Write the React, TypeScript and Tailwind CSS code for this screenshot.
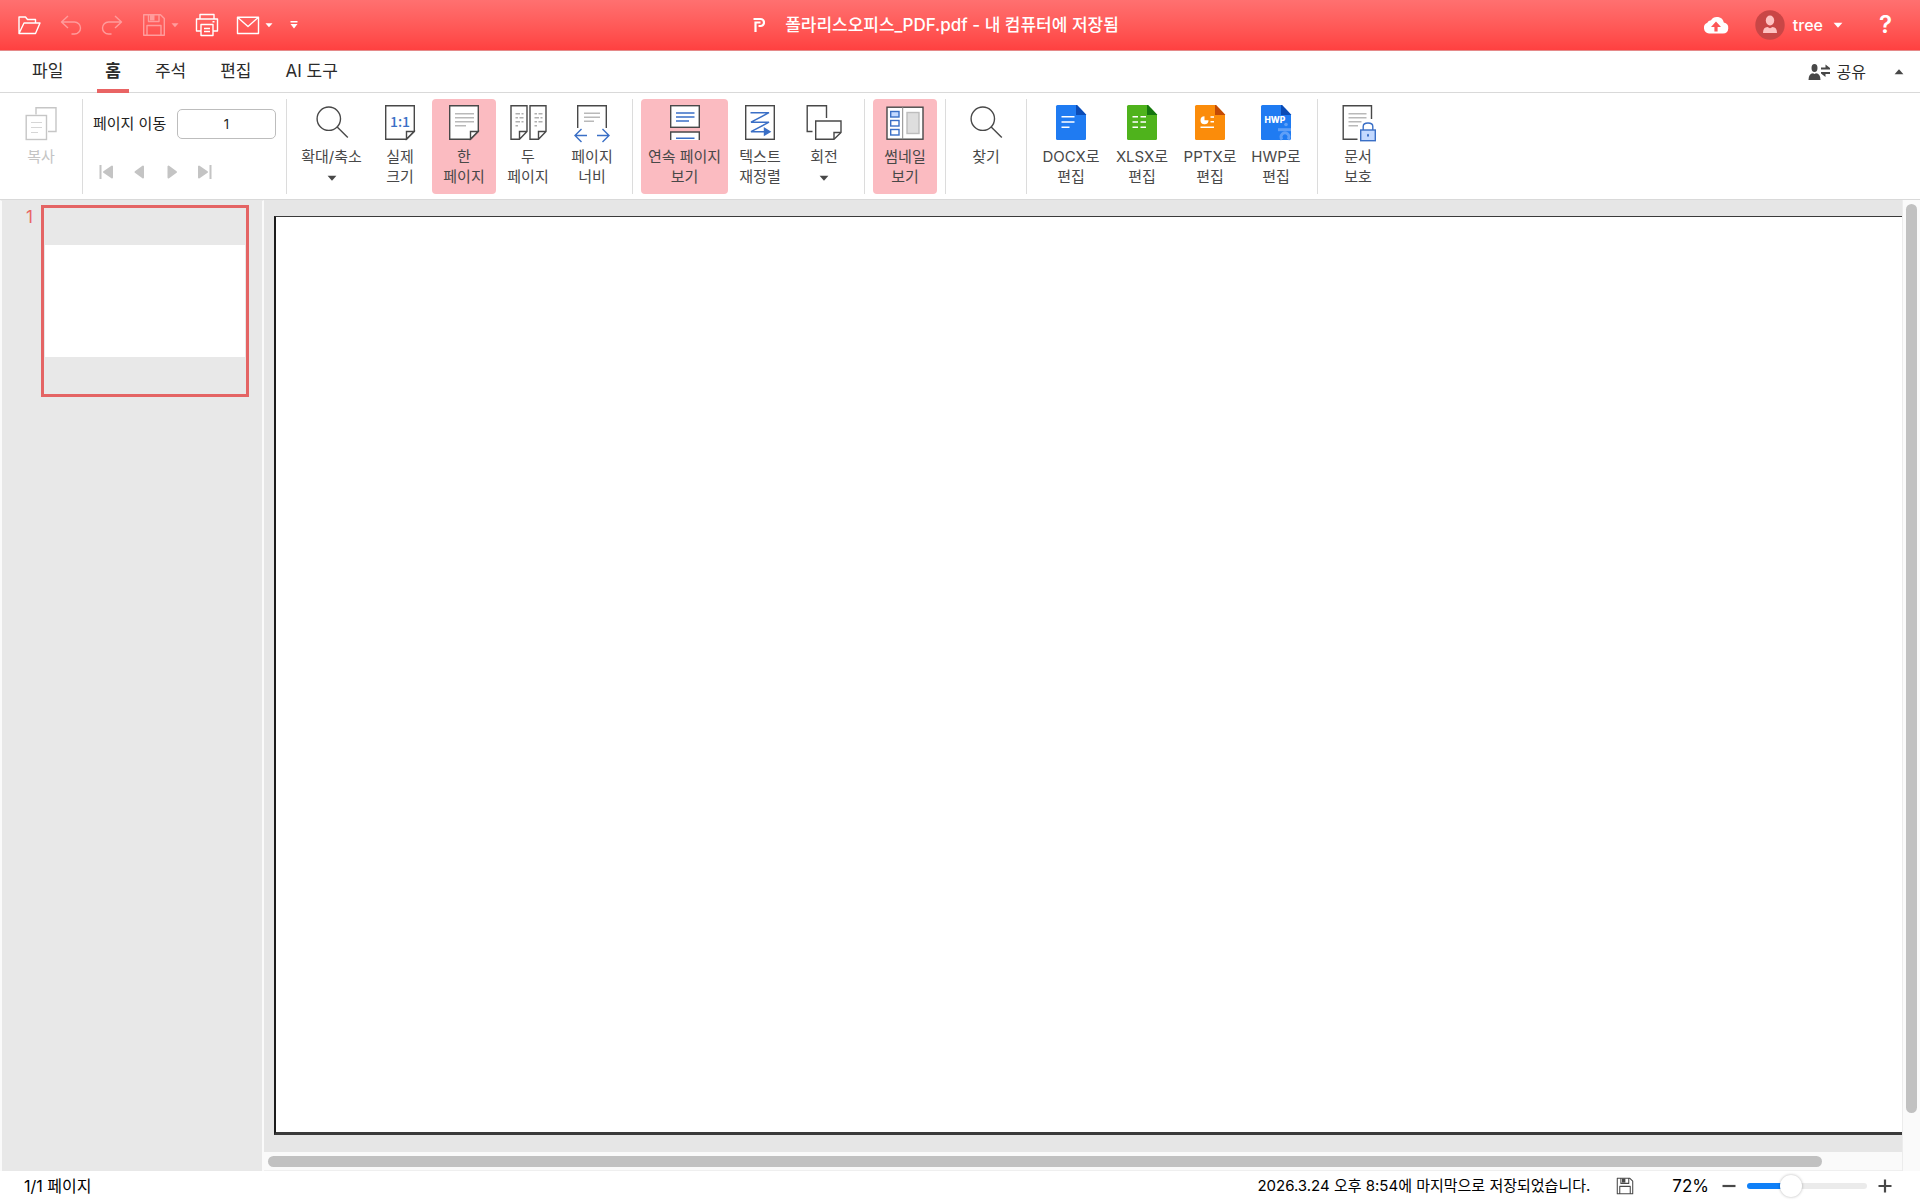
import React, { useState } from "react";

type IconProps = { children: React.ReactNode; className?: string };

function Icon36({ children, className = "" }: IconProps) {
  return (
    <svg
      viewBox="0 0 36 36"
      className={`h-9 w-9 shrink-0 overflow-visible ${className}`}
      fill="none"
      stroke="#484848"
      strokeWidth="1.4"
      aria-hidden="true"
    >
      {children}
    </svg>
  );
}

function Icon24({ children, className = "h-6 w-6" }: IconProps) {
  return (
    <svg
      viewBox="0 0 24 24"
      className={`shrink-0 overflow-visible ${className}`}
      fill="none"
      stroke="currentColor"
      strokeWidth="1.4"
      strokeLinejoin="round"
      aria-hidden="true"
    >
      {children}
    </svg>
  );
}

function Caret({ className = "", up = false }: { className?: string; up?: boolean }) {
  return (
    <svg viewBox="0 0 10 6" className={`shrink-0 ${className}`} fill="currentColor" aria-hidden="true">
      {up ? <path d="M5 0.3 9.4 5.2H0.6z" /> : <path d="M0.6 0.8H9.4L5 5.7z" />}
    </svg>
  );
}

/* ---------- ribbon icons ---------- */

const CopyIcon = () => (
  <Icon36>
    <g stroke="#c6c6c6">
      <path d="M13 9.500V2.700H33V26.500H25" />
      <rect x="3.200" y="10.500" width="20.300" height="24" />
      <path d="M8 17.500H19M8 22.500H19M8 27.500H15" stroke="#d6d6d6" strokeWidth="1" />
    </g>
  </Icon36>
);

const SearchIcon = () => (
  <Icon36>
    <circle cx="14.800" cy="13.700" r="11.700" />
    <path d="M23.200 22 33.800 32.600" />
  </Icon36>
);

const FoldedPage = () => (
  <>
    <path d="M3.700 0.700H32.300V26.500L24.500 34.300H3.700z" fill="#fff" />
    <path d="M24.500 34V26.500H32z" fill="#fff" />
  </>
);

const ActualSizeIcon = () => (
  <Icon36>
    <FoldedPage />
    <text
      x="18"
      y="21.500"
      textAnchor="middle"
      fontSize="14"
      fontWeight="500"
      fill="#3a6fc6"
      stroke="none"
      fontFamily="'Noto Sans CJK KR', sans-serif"
    >
      1:1
    </text>
  </Icon36>
);

const OnePageIcon = () => (
  <Icon36>
    <FoldedPage />
    <path d="M9 8.700H28M9 12.700H28M9 16.700H28M9 20.700H20" stroke="#b9b9b9" />
  </Icon36>
);

const TwoPageIcon = () => (
  <Icon36>
    <path d="M1 0.700H17V26.500L9.500 34.300H1zM9.500 34V26.500H17" fill="#fff" />
    <path d="M20 0.700H36V26.500L28.500 34.300H20zM28.500 34V26.500H36" fill="#fff" />
    <path
      d="M5.500 8.700H10M11.500 8.700H13.500M5.500 12.700H8M9.500 12.700H13.500M5.500 16.700H10M11.500 16.700H13.500M5.500 20.700H8M24.500 8.700H27M28.500 8.700H32.500M24.500 12.700H29M30.500 12.700H32.500M24.500 16.700H27M28.500 16.700H32.500M24.500 20.700H27"
      stroke="#b0b0b0"
    />
  </Icon36>
);

const PageWidthIcon = () => (
  <Icon36>
    <path d="M3.700 23V0.700H32.300V23" />
    <path d="M10 8.200H26M10 12.200H26M10 16.200H20" stroke="#b9b9b9" />
    <path d="M13 30.500H1.500M7.500 24 1 30.500 7.500 37M23 30.500H34.500M28.500 24 35 30.500 28.500 37" stroke="#3a6fc6" />
  </Icon36>
);

const ContinuousIcon = () => (
  <Icon36>
    <rect x="3.700" y="0.700" width="28.600" height="21.600" fill="#fff" />
    <path d="M3.700 35V27H32.300V35" fill="#fff" />
    <path d="M9 8H27.500M9 12H27.500M9 16H22M9 33.300H27.500" stroke="#3a6fc6" />
  </Icon36>
);

const ReflowIcon = () => (
  <Icon36>
    <rect x="3.700" y="0.700" width="28.600" height="33.600" />
    <g stroke="#3a6fc6">
      <path d="M8.500 7.700H27L9 17.200H27L9 26.700H23" />
      <path d="M22.500 23.300 28 26.700 22.500 30z" fill="#3a6fc6" />
    </g>
  </Icon36>
);

const RotateIcon = () => (
  <Icon36>
    <path d="M6.500 26.500H1.200V0.700H20.500V13" />
    <path d="M9.700 16H35V27.500L28 34.300H9.700z" fill="#fff" />
    <path d="M28 34V27.500H35" />
  </Icon36>
);

const ThumbnailIcon = () => (
  <Icon36>
    <rect x="0" y="2.200" width="36" height="32" fill="#fff" />
    <path d="M15.700 2.200V34.200" stroke="#8a8a8a" strokeWidth="1" />
    <rect x="20" y="7.500" width="12" height="21" fill="#dedede" stroke="#bdbdbd" />
    <g stroke="#3a6fc6">
      <rect x="3.700" y="6.500" width="8.300" height="5.500" fill="#c3d9ff" />
      <rect x="3.700" y="15.500" width="8.300" height="5.500" />
      <rect x="3.700" y="24.500" width="8.300" height="5.500" />
    </g>
  </Icon36>
);

function FileShape({ body, fold, children }: { body: string; fold: string; children: React.ReactNode }) {
  return (
    <Icon36>
      <g stroke="none">
        <path d="M4.500 0H24L33 9.500V33.500Q33 35 31.500 35H4.500Q3 35 3 33.500V1.500Q3 0 4.500 0z" fill={body} />
        <path d="M23 0H24L33 9.500V10H23z" fill={fold} />
      </g>
      {children}
    </Icon36>
  );
}

const DocxIcon = () => (
  <FileShape body="#1f7bf2" fold="#0b4bb5">
    <path d="M8.500 11.700H21.500M8.500 17H21.500M8.500 22.300H16.500" stroke="#fff" strokeWidth="1.600" />
  </FileShape>
);

const XlsxIcon = () => (
  <FileShape body="#4fb31c" fold="#14750f">
    <path
      d="M8.500 11.700H14M16.500 11.700H22M8.500 17H14M16.500 17H22M8.500 22.300H14M16.500 22.300H22"
      stroke="#fff"
      strokeWidth="1.600"
    />
  </FileShape>
);

const PptxIcon = () => (
  <FileShape body="#fb8c0a" fold="#c24a06">
    <path d="M12.500 11.200A4 4 0 1 0 16.500 15.200H12.500z" fill="#fff" stroke="none" />
    <path d="M18.500 12H22M18.500 16.700H22M8.500 22.300H22" stroke="#fff" strokeWidth="1.600" />
  </FileShape>
);

const HwpIcon = () => (
  <FileShape body="#1f7bf2" fold="#0b4bb5">
    <g stroke="#5f9ff7" fill="none">
      <circle cx="28" cy="19.500" r="1.800" fill="#5f9ff7" stroke="none" />
      <path d="M20 24.700H33" strokeWidth="3" />
      <path d="M24 34.500A4 4 0 1 1 30 34.500" strokeWidth="3" />
      <circle cx="27" cy="31.500" r="1" fill="#1f7bf2" stroke="none" />
    </g>
    <text
      x="6.500"
      y="17.500"
      fontSize="8.500"
      fontWeight="800"
      fill="#fff"
      stroke="none"
      fontFamily="Inter, sans-serif"
    >
      HWP
    </text>
  </FileShape>
);

const ProtectIcon = () => (
  <Icon36>
    <path d="M17.500 34.300H3.200V0.700H31.500V14" />
    <path d="M8.500 8.700H26.500M8.500 12.700H26.500M8.500 16.700H21.500M8.500 20.700H18" stroke="#b9b9b9" />
    <g stroke="#3a6fc6">
      <path d="M23.200 25V21.500Q23.200 18 28 18Q32.800 18 32.800 21.500V25" />
      <rect x="20.700" y="25" width="14.600" height="10.700" fill="#c3d9ff" />
      <ellipse cx="28" cy="30.300" rx="1" ry="1.500" fill="#3a6fc6" stroke="none" />
    </g>
  </Icon36>
);

/* ---------- ribbon parts ---------- */

type RibbonItem = {
  icon: React.ReactNode;
  lines: string[];
  width?: string;
  active?: boolean;
  menu?: boolean;
  disabled?: boolean;
};

function RibbonButton({ icon, lines, width = "w-16", active, menu, disabled }: RibbonItem) {
  return (
    <button
      type="button"
      disabled={disabled}
      aria-pressed={active}
      className={`flex shrink-0 flex-col items-center rounded-sm pt-1.5 ${width} ${
        active ? "bg-[#fbbbc1]" : ""
      } ${disabled ? "text-[#c4c4c4]" : "text-[#484848]"}`}
    >
      {icon}
      <span className="mt-1.5 flex flex-col text-[15px]/5 whitespace-nowrap">
        {lines.map((line) => (
          <span key={line}>{line}</span>
        ))}
      </span>
      {menu && <Caret className="mt-2 h-1.5 w-2.5" />}
    </button>
  );
}

function RibbonGroup({ items }: { items: RibbonItem[] }) {
  return (
    <div className="flex border-r border-[#dcdcdc] px-2 last:border-r-0">
      {items.map((item) => (
        <RibbonButton key={item.lines.join(" ")} {...item} />
      ))}
    </div>
  );
}

const groups: RibbonItem[][] = [
  [
    { icon: <SearchIcon />, lines: ["확대/축소"], width: "w-[73px]", menu: true },
    { icon: <ActualSizeIcon />, lines: ["실제", "크기"] },
    { icon: <OnePageIcon />, lines: ["한", "페이지"], active: true },
    { icon: <TwoPageIcon />, lines: ["두", "페이지"] },
    { icon: <PageWidthIcon />, lines: ["페이지", "너비"] },
  ],
  [
    { icon: <ContinuousIcon />, lines: ["연속 페이지", "보기"], width: "w-[87px]", active: true },
    { icon: <ReflowIcon />, lines: ["텍스트", "재정렬"] },
    { icon: <RotateIcon />, lines: ["회전"], menu: true },
  ],
  [{ icon: <ThumbnailIcon />, lines: ["썸네일", "보기"], active: true }],
  [{ icon: <SearchIcon />, lines: ["찾기"] }],
  [
    { icon: <DocxIcon />, lines: ["DOCX로", "편집"], width: "w-18" },
    { icon: <XlsxIcon />, lines: ["XLSX로", "편집"], width: "w-[70px]" },
    { icon: <PptxIcon />, lines: ["PPTX로", "편집"], width: "w-[66px]" },
    { icon: <HwpIcon />, lines: ["HWP로", "편집"], width: "w-[66px]" },
  ],
  [{ icon: <ProtectIcon />, lines: ["문서", "보호"] }],
];

const pageMoves = [
  { label: "첫 페이지", path: "M1.500 2V16M13 3.500V14.500L5 9z" },
  { label: "이전 페이지", path: "M11 3.500V14.500L3.500 9z" },
  { label: "다음 페이지", path: "M3.500 3.500V14.500L11 9z" },
  { label: "마지막 페이지", path: "M12.500 2V16M1 3.500V14.500L9 9z" },
];

function PageNavigation() {
  return (
    <div className="flex flex-col border-r border-[#dcdcdc] pr-2.5 pl-1.5">
      <div className="flex items-center pt-2.5 pl-1">
        <label htmlFor="page-number" className="w-21 text-[15px]/5 whitespace-nowrap text-[#222]">
          페이지 이동
        </label>
        <input
          id="page-number"
          defaultValue="1"
          className="h-[30px] w-[99px] rounded-[5px] border border-[#bdbdbd] bg-white text-center text-[13px] text-[#222]"
        />
      </div>
      <div className="flex pt-6">
        {pageMoves.map((move) => (
          <button key={move.label} type="button" aria-label={move.label} className="flex w-[33px] justify-center" disabled>
            <svg viewBox="0 0 14 18" className="h-[18px] w-3.5" fill="#c4c4c4" stroke="#c4c4c4" strokeWidth="2" strokeLinejoin="round">
              <path d={move.path} />
            </svg>
          </button>
        ))}
      </div>
    </div>
  );
}

/* ---------- page bars ---------- */

function SaveGlyph({ className = "h-6 w-6" }: { className?: string }) {
  return (
    <Icon24 className={className}>
      <path d="M1.700 1.700H18.500L22.300 5.500V22.300H1.700zM6.500 1.700V8.500H17V1.700M5 22V12.500H19V22" />
      <path d="M8 2H12.500V7.500H8z" fill="currentColor" stroke="none" />
    </Icon24>
  );
}

function TitleBar() {
  return (
    <header className="grid h-[51px] shrink-0 grid-cols-[1fr_auto_1fr] items-center border-b border-[#e58a8a] bg-linear-to-b from-[#ff7070] to-[#ff4040] text-white">
      <div className="flex items-center pl-2">
        <button type="button" aria-label="열기" className="flex w-[42px] justify-center">
          <Icon24>
            <path d="M2 20.500V4H8.500L10.500 6.500H18.500V10M2 20.500 7 10H23L18.500 20.500z" />
          </Icon24>
        </button>
        <button type="button" aria-label="실행 취소" disabled className="flex w-[42px] justify-center text-[#ff9c9c]">
          <Icon24>
            <path d="M9 3 2.500 9 9 15M2.500 9H15.500A5.800 5.800 0 0 1 15.500 21H12.500" />
          </Icon24>
        </button>
        <button type="button" aria-label="다시 실행" disabled className="flex w-10 justify-center text-[#ff9c9c]">
          <Icon24>
            <path d="M15 3 21.500 9 15 15M21.500 9H8.500A5.800 5.800 0 0 0 8.500 21H11.500" />
          </Icon24>
        </button>
        <button type="button" aria-label="저장" disabled className="ml-1.5 flex w-8 justify-center text-[#ff9c9c]">
          <SaveGlyph />
        </button>
        <button type="button" aria-label="저장 옵션" disabled className="flex w-2.5 justify-center text-[#ff9c9c]">
          <Caret className="h-1.5 w-2" />
        </button>
        <button type="button" aria-label="인쇄" className="ml-2 flex w-[38px] justify-center">
          <Icon24>
            <path d="M5 6V1.500H19V6M6 18H1.500V6H22.500V18H18M6 11.500H18V22.500H6zM9 15.500H15M9 18.500H15M17.500 8.800H19.500" />
          </Icon24>
        </button>
        <button type="button" aria-label="메일 보내기" className="ml-1.5 flex w-8 justify-center">
          <Icon24>
            <path d="M1.500 4.200H22.500V20.500H1.500zM1.500 4.200 12 13.500 22.500 4.200" />
          </Icon24>
        </button>
        <button type="button" aria-label="메일 옵션" className="flex w-2.5 justify-center">
          <Caret className="h-1.5 w-2" />
        </button>
        <button type="button" aria-label="빠른 실행 도구 모음" className="ml-3 flex w-4 justify-center">
          <svg viewBox="0 0 8 8" className="h-2 w-2" fill="currentColor" aria-hidden="true">
            <path d="M0.500 0H7.500V1.500H0.500zM0.500 3H7.500L4 7.500z" />
          </svg>
        </button>
      </div>

      <div className="flex items-center gap-5 pr-12">
        <svg viewBox="0 0 12 16" className="h-4 w-3" fill="none" stroke="currentColor" strokeWidth="2.200" aria-hidden="true">
          <path d="M0.500 2H7.500A3.500 3.500 0 0 1 7.500 9H5.500M2.500 15V5.500H7.500" />
        </svg>
        <h1 className="text-[17px]/6 font-medium whitespace-nowrap">폴라리스오피스_PDF.pdf - 내 컴퓨터에 저장됨</h1>
      </div>

      <div className="flex items-center justify-end pr-7">
        <button type="button" aria-label="클라우드에 업로드">
          <svg viewBox="0 0 26 18" className="h-[18px] w-[26px]" aria-hidden="true">
            <path
              d="M6 17.500A5.600 5.600 0 0 1 4.300 6.800A4 4 0 0 1 8 4.200A7 7 0 0 1 20.800 6.600A5.500 5.500 0 0 1 20 17.500z"
              fill="#fff"
            />
            <path d="M13 5.500 18 11H14.600V15.500H11.400V11H8z" fill="#fd5656" />
          </svg>
        </button>
        <button type="button" className="ml-[26px] flex items-center">
          <svg viewBox="0 0 30 30" className="h-[30px] w-[30px]" aria-hidden="true">
            <circle cx="15" cy="15" r="14.700" fill="#c94646" />
            <ellipse cx="15" cy="10.500" rx="4.200" ry="5" fill="#ffc2c2" />
            <path d="M8 23Q8 17 12.500 17L15 18.200 17.500 17Q22 17 22 23z" fill="#ffc2c2" />
          </svg>
          <span className="ml-2 text-base font-medium">tree</span>
          <Caret className="ml-2.5 h-1.5 w-2.5" />
        </button>
        <button type="button" aria-label="도움말" className="ml-9 text-2xl/6 font-semibold">
          ?
        </button>
      </div>
    </header>
  );
}

const tabs = ["파일", "홈", "주석", "편집", "AI 도구"];

function TabBar() {
  const [current, setCurrent] = useState("홈");
  return (
    <nav className="flex h-[42px] shrink-0 items-stretch justify-between border-b border-[#d9d9d9] bg-white text-[#2b2b2b]">
      <div role="tablist" className="-mb-px flex gap-[18px] pl-6">
        {tabs.map((tab) => (
          <button
            key={tab}
            type="button"
            role="tab"
            aria-selected={tab === current}
            onClick={() => setCurrent(tab)}
            className={`flex flex-col items-center justify-between whitespace-nowrap ${
              tab === current ? "pl-2" : "px-2"
            }`}
          >
            <span className={`pt-2 text-[17px]/6 ${tab === current ? "px-2 font-bold" : ""}`}>{tab}</span>
            {tab === current && <span className="h-1 w-full bg-[#e96464]" />}
          </button>
        ))}
      </div>
      <div className="flex items-center pr-4">
        <button type="button" className="flex items-center gap-1.5 text-base">
          <svg viewBox="0 0 23 18" className="h-[18px] w-[23px]" fill="#484848" aria-hidden="true">
            <ellipse cx="6.500" cy="5" rx="3" ry="4" />
            <path d="M0.500 17Q0.500 10.800 5 10.300L6.500 11 8 10.300Q12.500 10.800 12.500 17z" />
            <path d="M13 4.500H17.500V1.500L22 5V6.500H13zM22 9H13V10.500L17.500 14V11H22z" />
          </svg>
          공유
        </button>
        <button type="button" aria-label="리본 접기" className="ml-7 text-[#484848]">
          <Caret up className="h-1.5 w-2.5" />
        </button>
      </div>
    </nav>
  );
}

function Ribbon() {
  return (
    <div className="flex shrink-0 border-b border-[#d9d9d9] bg-white pt-1.5 pb-[5px]">
      <div className="flex h-[95px]">
        <div className="flex border-r border-[#dcdcdc] px-[9px]">
          <RibbonButton icon={<CopyIcon />} lines={["복사"]} disabled />
        </div>
        <PageNavigation />
        {groups.map((items) => (
          <RibbonGroup key={items[0].lines[0]} items={items} />
        ))}
      </div>
    </div>
  );
}

function ThumbnailPane() {
  return (
    <aside className="w-[264px] shrink-0 border-x-2 border-t border-[#fafafa] border-t-[#e8e8e8] bg-[#e8e8e8] pt-1">
      <button type="button" className="flex w-full items-start pl-6" aria-current="page">
        <span className="w-[15px] text-left text-[17px]/6 text-[#e96464]">1</span>
        <span className="flex h-48 w-52 flex-col justify-center border-[3px] border-[#e46464] px-px">
          <span className="block h-28 bg-white" />
        </span>
      </button>
    </aside>
  );
}

function Viewer() {
  return (
    <main className="flex min-w-0 flex-1 bg-[#fafafa]">
      <div className="flex min-w-0 flex-1 flex-col">
        <div className="flex flex-1 bg-[#e6e6e6] pt-4 pb-[17px] pl-2.5">
          <div className="flex-1 border-t border-b-[3px] border-l-2 border-[#3a3a3a] border-l-[#1c1c1c] bg-white" />
        </div>
        <div className="flex h-[19px] items-center border-b border-[#efefef] pl-1">
          <div className="mr-20 h-[11px] flex-1 rounded-full bg-[#c1c1c1]" />
        </div>
      </div>
      <div className="flex w-[18px] shrink-0 flex-col items-center border-l border-[#ececec] pt-1 pb-5">
        <div className="h-[96%] w-[11px] rounded-full bg-[#c1c1c1]" />
      </div>
    </main>
  );
}

function StatusBar() {
  const [zoom, setZoom] = useState(34);
  return (
    <footer className="flex h-[29px] shrink-0 items-center justify-between bg-white pr-[27px] pl-6 text-black">
      <span className="text-base/6">1/1 페이지</span>
      <div className="flex items-center">
        <span className="text-[15px]/6 whitespace-nowrap">2026.3.24 오후 8:54에 마지막으로 저장되었습니다.</span>
        <button type="button" aria-label="저장" className="ml-[26px] text-[#484848]">
          <SaveGlyph className="h-[18px] w-[18px]" />
        </button>
        <label htmlFor="zoom" className="ml-[38px] text-[17px]/6">
          72%
        </label>
        <button type="button" aria-label="축소" className="ml-3 text-[#484848]">
          <svg viewBox="0 0 16 16" className="h-4 w-4" fill="none" stroke="currentColor" strokeWidth="2.200">
            <path d="M1.500 8H14.500" />
          </svg>
        </button>
        <input
          id="zoom"
          type="range"
          value={zoom}
          onChange={(event) => setZoom(Number(event.target.value))}
          className="ml-2.5 h-6 w-30 appearance-none bg-transparent [&::-webkit-slider-runnable-track]:h-1.5 [&::-webkit-slider-runnable-track]:rounded-full [&::-webkit-slider-runnable-track]:bg-[linear-gradient(to_right,#0f80f8_37%,#ebebeb_37%)] [&::-webkit-slider-thumb]:-mt-2 [&::-webkit-slider-thumb]:h-[22px] [&::-webkit-slider-thumb]:w-[22px] [&::-webkit-slider-thumb]:appearance-none [&::-webkit-slider-thumb]:rounded-full [&::-webkit-slider-thumb]:bg-white [&::-webkit-slider-thumb]:shadow-[0_0_3px_rgba(0,0,0,0.3)]"
        />
        <button type="button" aria-label="확대" className="ml-2.5 text-[#484848]">
          <svg viewBox="0 0 16 16" className="h-4 w-4" fill="none" stroke="currentColor" strokeWidth="2.200">
            <path d="M1.500 8H14.500M8 1.500V14.500" />
          </svg>
        </button>
      </div>
    </footer>
  );
}

export default function App() {
  return (
    <div className="flex h-screen flex-col overflow-hidden bg-white font-[Inter,'Noto_Sans_CJK_KR',sans-serif]">
      <TitleBar />
      <TabBar />
      <Ribbon />
      <div className="flex min-h-0 flex-1">
        <ThumbnailPane />
        <Viewer />
      </div>
      <StatusBar />
    </div>
  );
}
